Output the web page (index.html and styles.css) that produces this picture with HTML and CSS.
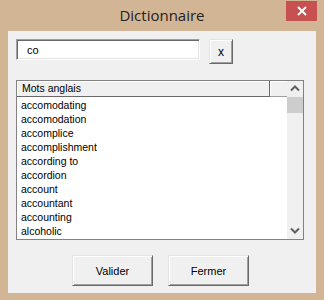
FILE: index.html
```html
<!DOCTYPE html>
<html lang="fr">
<head>
  <meta charset="UTF-8">
  <title>Dictionnaire</title>
  <link rel="stylesheet" href="styles.css">
</head>
<body>
  <div class="window">
    <div class="titlebar">
      <span></span>
      <h1 class="title">Dictionnaire</h1>
      <button class="close" type="button">
        <svg width="10" height="10" viewBox="0 0 10 10">
          <path d="M1 1 L9 9 M9 1 L1 9" stroke="#fff" stroke-width="2" fill="none"/>
        </svg>
      </button>
    </div>
    <div class="client">
      <div class="search-row">
        <input class="search" type="text" value="co">
        <button class="btn btn-clear" type="button">x</button>
      </div>
      <div class="listbox">
        <div class="list-col">
          <div class="list-head">
            <div class="head-cell">Mots anglais</div>
            <div class="head-cell head-rest"></div>
          </div>
          <ul class="list-items">
            <li>accomodating</li>
            <li>accomodation</li>
            <li>accomplice</li>
            <li>accomplishment</li>
            <li>according to</li>
            <li>accordion</li>
            <li>account</li>
            <li>accountant</li>
            <li>accounting</li>
            <li>alcoholic</li>
          </ul>
        </div>
        <div class="scrollbar">
          <div class="arrow">
            <svg width="16" height="16" viewBox="0 0 16 16">
              <path d="M4 9.5 L8 5.5 L12 9.5" stroke="#606060" stroke-width="2" fill="none"/>
            </svg>
          </div>
          <div class="thumb"></div>
          <div class="track"></div>
          <div class="arrow">
            <svg width="16" height="16" viewBox="0 0 16 16">
              <path d="M4 5.5 L8 9.5 L12 5.5" stroke="#606060" stroke-width="2" fill="none"/>
            </svg>
          </div>
        </div>
      </div>
      <div class="actions">
        <button class="btn btn-action" type="button">Valider</button>
        <button class="btn btn-action" type="button">Fermer</button>
      </div>
    </div>
  </div>
</body>
</html>
```

FILE: styles.css
```css
body{
  margin: 0;
  font-family: "Liberation Sans", Arial, sans-serif;
  font-size: 10.5px;
  color: #000;
}
.window{
  width: 324px;
  height: 300px;
  box-sizing: border-box;
  padding: 0 8px 7px;
  background: #d2b595;
  display: flex;
  flex-direction: column;
}
.titlebar{
  height: 31px;
  display: grid;
  grid-template-columns: 1fr auto 1fr;
  align-items: start;
}
.title{
  margin: 0;
  padding-top: 5px;
  font-family: "Open Sans", "Noto Sans", sans-serif;
  font-weight: normal;
  font-size: 15px;
  line-height: 20px;
  color: #222;
}
.close{
  justify-self: end;
  margin: 1px -1px 0 0;
  width: 31px;
  height: 20px;
  padding: 0;
  border: 0;
  background: #c75050;
  display: flex;
  justify-content: center;
  align-items: center;
}
.close svg{
  display: block;
}
.client{
  flex: 1;
  background: #f0f0f0;
  padding: 8px 0 7px 8px;
  display: flex;
  flex-direction: column;
}
.search-row{
  display: flex;
  align-items: flex-start;
  height: 25px;
}
.search{
  width: 184px;
  height: 21px;
  box-sizing: border-box;
  margin: 0;
  padding: 0 0 0 10px;
  border: 1px solid;
  border-color: #a0a0a0 #ffffff #ffffff #a0a0a0;
  box-shadow: inset 1px 1px 0 #696969, inset -1px -1px 0 #e3e3e3;
  background: #fff;
  font: inherit;
  font-size: 11px;
  color: #000;
  outline: none;
}
.btn{
  margin: 0;
  padding: 0;
  box-sizing: border-box;
  font: inherit;
  color: #000;
  background: #f0f0f0;
  border: 1px solid;
  border-color: #e3e3e3 #696969 #696969 #e3e3e3;
  box-shadow: inset 1px 1px 0 #fff, inset -1px -1px 0 #a0a0a0;
}
.btn-clear{
  margin-left: 9px;
  width: 24px;
  height: 25px;
  font-size: 12px;
}
.listbox{
  margin-top: 16px;
  width: 288px;
  height: 160px;
  box-sizing: border-box;
  border: 1px solid #828282;
  background: #fff;
  display: flex;
  overflow: hidden;
}
.list-col{
  width: 270px;
  display: flex;
  flex-direction: column;
}
.list-head{
  display: flex;
  height: 16px;
}
.head-cell{
  box-sizing: border-box;
  width: 253px;
  height: 16px;
  padding-left: 5px;
  line-height: 15px;
  background: #f0f0f0;
  border-right: 1px solid #696969;
  border-bottom: 1px solid #696969;
  box-shadow: inset 1px 1px 0 #fff;
}
.head-rest{
  width: 17px;
  padding: 0;
  border-right: 0;
  border-bottom-color: #a0a0a0;
}
.list-items{
  margin: 0;
  padding: 1px 0 0;
  list-style: none;
}
.list-items li{
  height: 14px;
  line-height: 14px;
  padding-left: 4px;
}
.scrollbar{
  width: 16px;
  background: #f0f0f0;
  display: flex;
  flex-direction: column;
}
.arrow{
  height: 16px;
  display: flex;
  justify-content: center;
  align-items: center;
}
.arrow svg{
  display: block;
}
.thumb{
  height: 16px;
  background: #cdcdcd;
}
.track{
  flex: 1;
}
.actions{
  margin-top: 15px;
  padding-left: 56px;
  display: flex;
  gap: 15px;
}
.btn-action{
  width: 81px;
  height: 31px;
  font-size: 11px;
}
```
